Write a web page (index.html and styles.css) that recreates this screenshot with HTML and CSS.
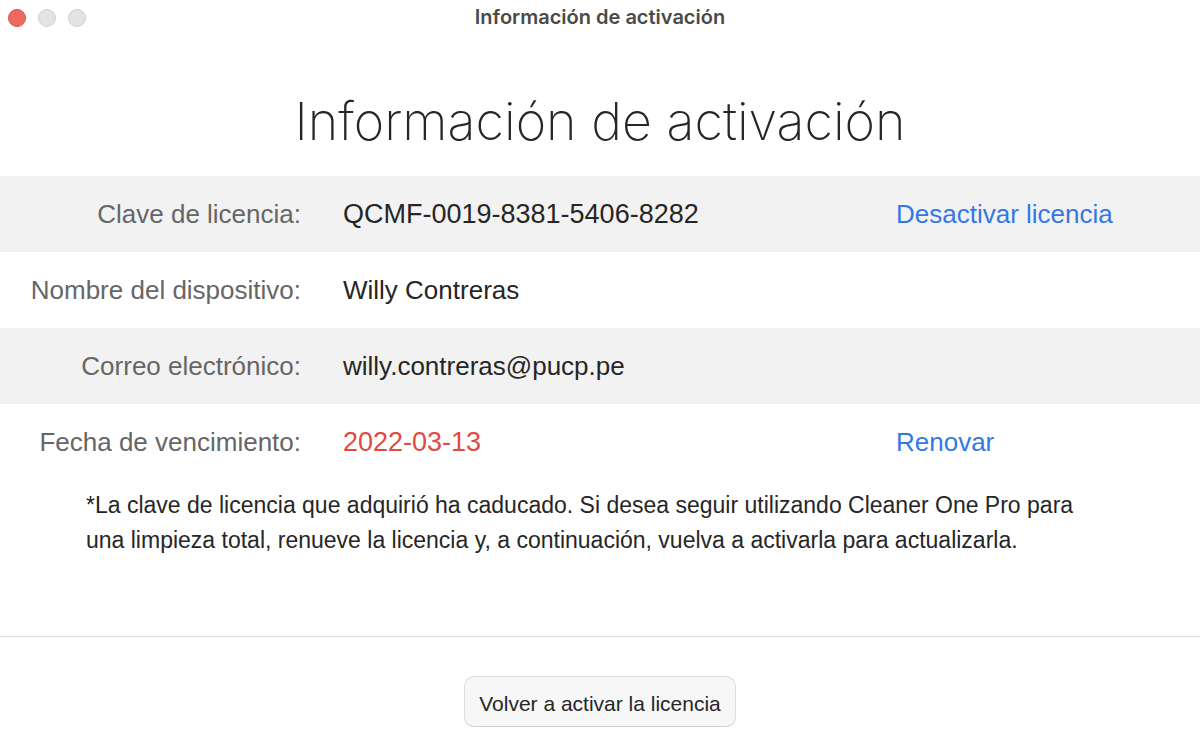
FILE: index.html
```html
<!DOCTYPE html>
<html lang="es">
<head>
<meta charset="utf-8">
<title>Información de activación</title>
<link rel="stylesheet" href="styles.css">
</head>
<body>
<div class="window">
  <header class="titlebar">
    <div class="controls">
      <button class="dot dot-close" type="button" aria-label="Cerrar"></button>
      <button class="dot" type="button" aria-label="Minimizar"></button>
      <button class="dot" type="button" aria-label="Ampliar"></button>
    </div>
    <div class="window-title">Información de activación</div>
  </header>
  <main class="content">
    <h1 class="heading">Información de activación</h1>
    <dl class="details">
      <div class="row shaded">
        <dt class="label">Clave de licencia:</dt>
        <dd class="value numeric">QCMF-0019-8381-5406-8282</dd>
        <dd class="action"><a class="link" href="#">Desactivar licencia</a></dd>
      </div>
      <div class="row">
        <dt class="label">Nombre del dispositivo:</dt>
        <dd class="value">Willy Contreras</dd>
      </div>
      <div class="row shaded">
        <dt class="label">Correo electrónico:</dt>
        <dd class="value">willy.contreras@pucp.pe</dd>
      </div>
      <div class="row">
        <dt class="label">Fecha de vencimiento:</dt>
        <dd class="value numeric expired">2022-03-13</dd>
        <dd class="action"><a class="link" href="#">Renovar</a></dd>
      </div>
    </dl>
    <p class="note">*La clave de licencia que adquirió ha caducado. Si desea seguir utilizando Cleaner One Pro para<br>una limpieza total, renueve la licencia y, a continuación, vuelva a activarla para actualizarla.</p>
  </main>
  <footer class="footer">
    <button class="reactivate" type="button">Volver a activar la licencia</button>
  </footer>
</div>
</body>
</html>
```
FILE: styles.css
```css
* {
  box-sizing: border-box;
}

body {
  margin: 0;
  background: #fff;
  color: #262626;
  font-family: "Liberation Sans", sans-serif;
}

.window {
  display: flex;
  flex-direction: column;
  min-height: 100vh;
}

.titlebar {
  display: grid;
  grid-template-columns: 1fr auto 1fr;
  align-items: center;
  height: 36px;
  padding: 0 8px;
}

.controls {
  display: flex;
  gap: 12px;
}

.dot {
  width: 18px;
  height: 18px;
  padding: 0;
  border: 1px solid #d1d1d1;
  border-radius: 50%;
  background: #e3e3e3;
}

.dot-close {
  border-color: #d85548;
  background: #ec6a5e;
}

.window-title {
  padding-bottom: 2px;
  color: #4a4a4a;
  font: 600 20px/24px Inter, sans-serif;
}

.content {
  flex: 1;
}

.heading {
  margin: 52px 0 20px;
  font-family: Inter, "Liberation Sans", sans-serif;
  font-size: 52px;
  font-weight: 200;
  line-height: 68px;
  text-align: center;
}

.details {
  margin: 0;
  font-size: 26px;
  line-height: 76px;
}

.row {
  display: grid;
  grid-template-columns: 301fr 511fr 304fr;
  column-gap: 42px;
}

.shaded {
  background: #f2f2f2;
}

.label {
  color: #666;
  text-align: right;
  white-space: nowrap;
}

.value,
.action {
  margin: 0;
  white-space: nowrap;
}

.numeric {
  font-size: 27px;
}

.expired {
  color: #e04a3f;
}

.link {
  color: #3478e5;
  text-decoration: none;
}

.note {
  margin: 8px 80px 16px 86px;
  font-size: 23px;
  line-height: 35px;
}

.footer {
  display: flex;
  justify-content: center;
  padding: 39px 16px 18px;
  border-top: 1px solid #dcdcdc;
}

.reactivate {
  height: 51px;
  padding: 5px 14px 0;
  border: 1px solid #dcdcdc;
  border-bottom-color: #cfcfcf;
  border-radius: 10px;
  background: #f7f7f7;
  color: #262626;
  font: 400 21px/28px "Liberation Sans", sans-serif;
}
```
